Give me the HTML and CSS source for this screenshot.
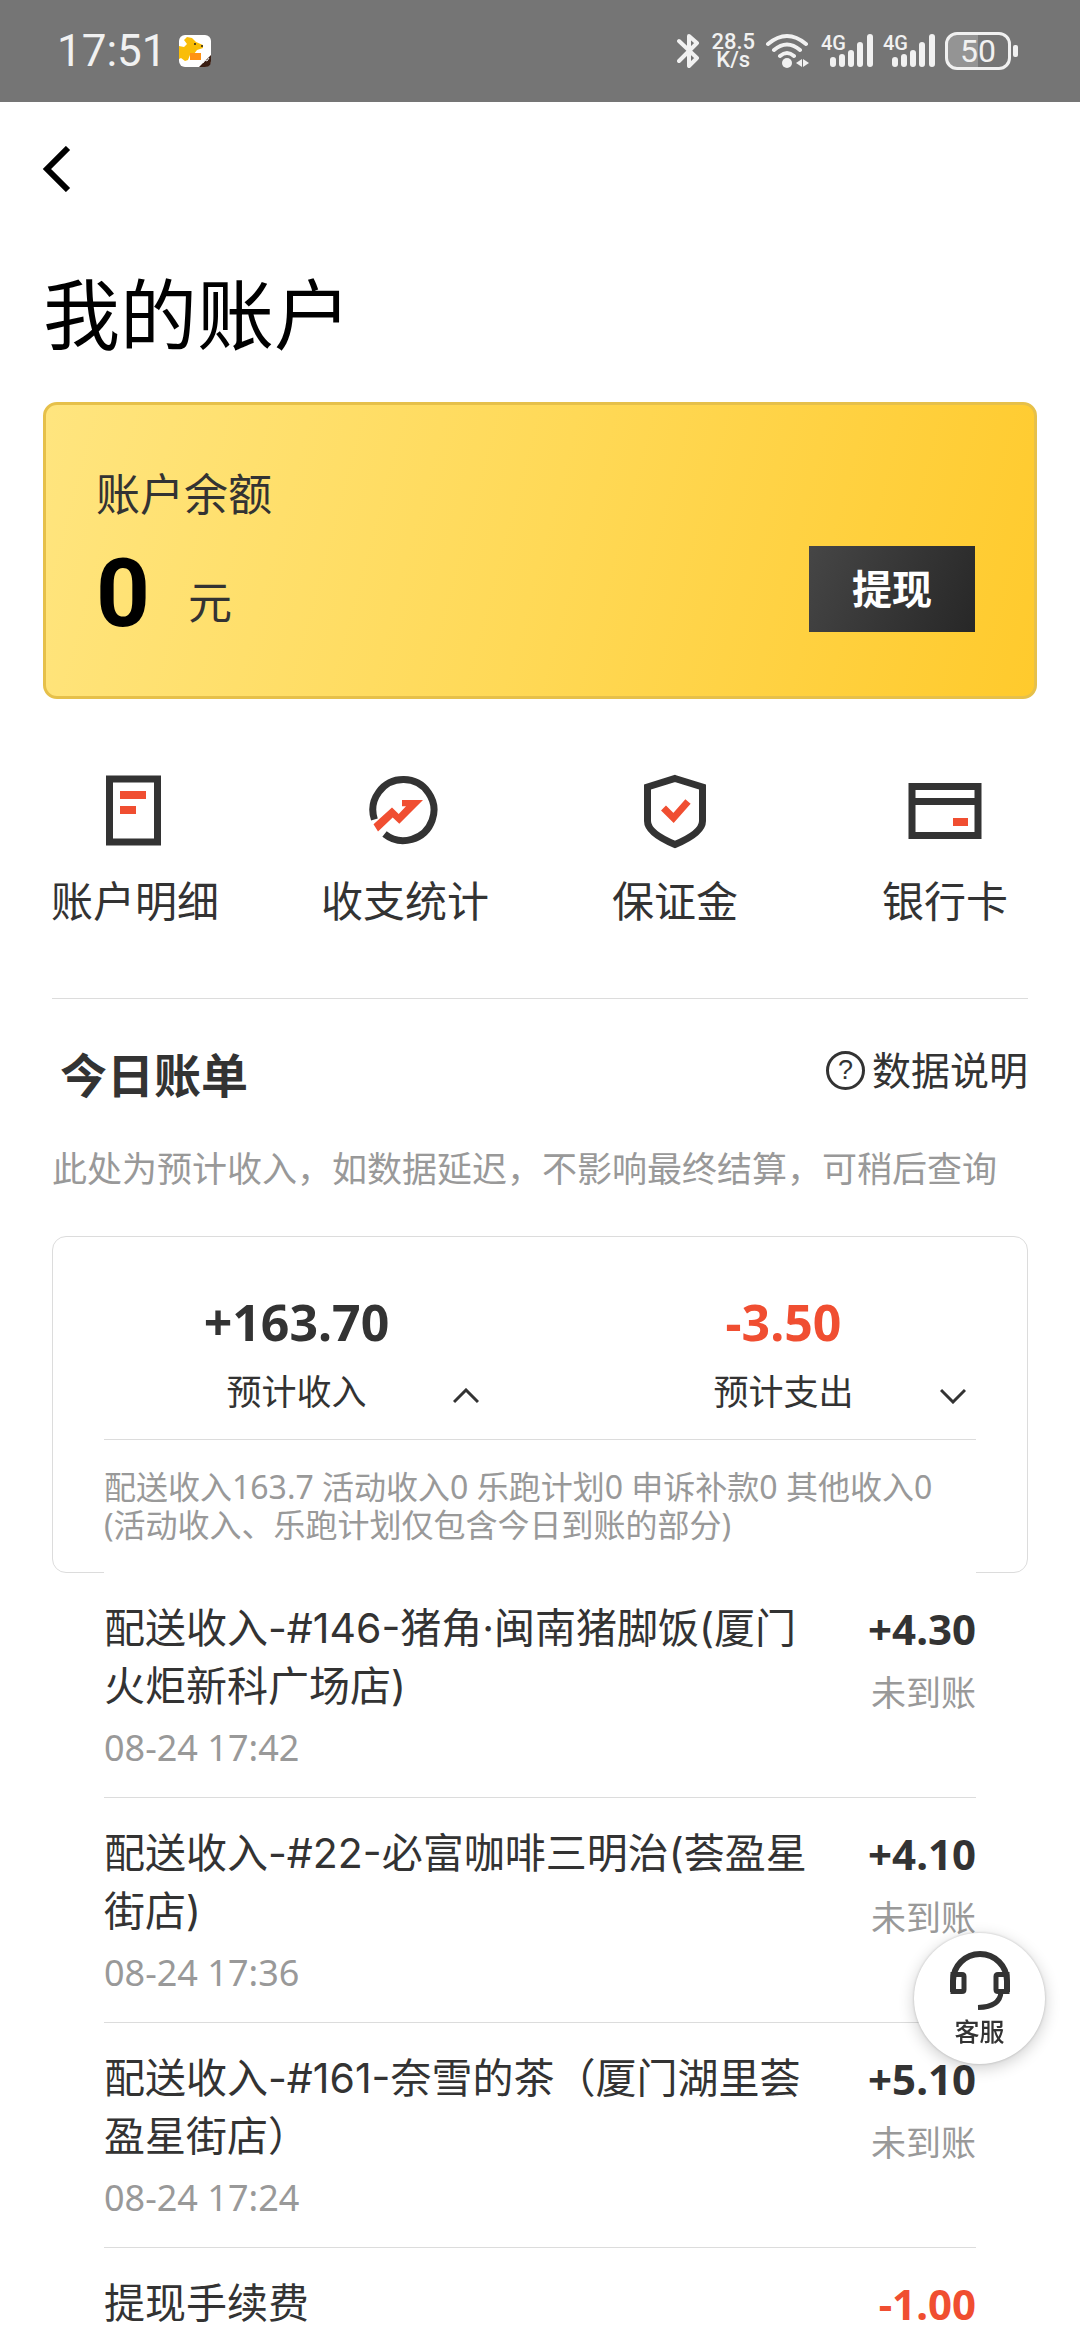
FILE: index.html
```html
<!DOCTYPE html>
<html lang="zh-CN">
<head>
<meta charset="utf-8">
<meta name="viewport" content="width=device-width, initial-scale=1">
<title>我的账户</title>
<link rel="stylesheet" href="styles.css">
</head>
<body>
<header class="status">
  <span class="status-time">17:51</span>
  <svg class="status-app" width="32" height="32" viewBox="0 0 32 32" aria-hidden="true">
    <rect width="32" height="32" rx="6" fill="#fff"/>
    <path d="M5 5l3-3 5 1 4 4 7 3v3l-6 2-3 4-4 1-2 5-3 1-4-3-2 1V11l5 1 3-3z" fill="#f9bd08"/>
    <circle cx="16" cy="9" r="1" fill="#222"/><circle cx="23" cy="11" r="1" fill="#222"/>
    <path d="M11 18h11v7H11z" fill="#ff9214"/>
    <path d="M32 20v6q0 6-6 6h-6z" fill="#3b1f14"/>
    <path d="M24 28l2-3 2 1M28 26l2-3" stroke="#eee" stroke-width="1" fill="none"/>
  </svg>
  <div class="status-right">
    <svg width="24" height="36" viewBox="0 0 24 36" fill="none" stroke="#f1f1f1" stroke-width="4" stroke-linecap="round" stroke-linejoin="round" aria-hidden="true"><path d="M2 8l18 17-8 8V3l8 7L2 28"/></svg>
    <span class="speed">28.5<br>K/s</span>
    <svg width="46" height="36" viewBox="0 0 46 36" fill="none" stroke="#f1f1f1" stroke-width="4" stroke-linecap="round" aria-hidden="true"><path d="M3 11q19-16 38 0M9 17q13-11 26 0M15 23q7-6 14 0"/><circle cx="22" cy="30" r="5" fill="#f1f1f1" stroke="none"/><path d="M37 26v8l-6-4zM38 34v-8l6 4z" fill="#f1f1f1" stroke="none"/></svg>
    <span class="signal"><span class="net">4G</span><svg width="52" height="36" viewBox="0 0 52 36" stroke="#f1f1f1" stroke-width="6" stroke-linecap="round" aria-hidden="true"><path d="M12 27v4M21 24v7M30 20v11M39 12v19M49 4v27"/></svg></span>
    <span class="signal"><span class="net">4G</span><svg width="52" height="36" viewBox="0 0 52 36" stroke="#f1f1f1" stroke-width="6" stroke-linecap="round" aria-hidden="true"><path d="M12 27v4M21 24v7M30 20v11M39 12v19M49 4v27"/></svg></span>
    <span class="battery"><span class="battery-body">50</span><span class="battery-tip"></span></span>
  </div>
</header>

<main>
  <nav class="nav">
    <button class="back" type="button" aria-label="返回">
      <svg width="30" height="46" viewBox="0 0 30 46" fill="none" stroke="#000" stroke-width="6" aria-hidden="true"><path d="M27 2L6 23l21 21"/></svg>
    </button>
  </nav>
  <h1 class="title">我的账户</h1>

  <section class="balance">
    <div class="balance-label">账户余额</div>
    <div class="balance-row">
      <span class="balance-value">0</span>
      <span class="balance-unit">元</span>
      <button class="withdraw" type="button">提现</button>
    </div>
  </section>

  <nav class="menu">
    <a class="menu-item" href="#detail">
      <svg width="76" height="76" viewBox="0 0 76 76" aria-hidden="true"><path d="M12.5 6h48v63h-48z" fill="none" stroke="#333" stroke-width="7"/><path d="M23 18h26v8H23zM23 33h16v8H23z" fill="#f04e31"/></svg>
      <span>账户明细</span>
    </a>
    <a class="menu-item" href="#stats">
      <svg width="76" height="76" viewBox="0 0 76 76" aria-hidden="true"><path d="M7.400 46.500A30.500 30.500 0 1 1 17.500 61" fill="none" stroke="#333" stroke-width="7"/><path d="M6.500 51.300L25 34.500l6.700 6.500 7.300-7.700h-4v-6.200h21L32.300 50.700 25.700 44.500 11 58.500z" fill="#f04e31"/></svg>
      <span>收支统计</span>
    </a>
    <a class="menu-item" href="#deposit">
      <svg width="76" height="76" viewBox="0 0 76 76" aria-hidden="true"><path d="M38 5.500L65.500 14v34q0 12-27.500 23.500Q10.500 60 10.500 48V14z" fill="none" stroke="#333" stroke-width="7"/><path d="M26.500 35l10 10L51 28.500" fill="none" stroke="#f04e31" stroke-width="7"/></svg>
      <span>保证金</span>
    </a>
    <a class="menu-item" href="#cards">
      <svg width="76" height="76" viewBox="0 0 76 76" aria-hidden="true"><path d="M5 13.500h66v49H5zM5 28.500h66" fill="none" stroke="#333" stroke-width="7"/><path d="M46 45h15v8H46z" fill="#f04e31"/></svg>
      <span>银行卡</span>
    </a>
  </nav>

  <section class="today">
    <div class="today-head">
      <h2 class="today-title">今日账单</h2>
      <a class="explain" href="#explain"><span class="explain-icon" aria-hidden="true">?</span>数据说明</a>
    </div>
    <p class="hint">此处为预计收入，如数据延迟，不影响最终结算，可稍后查询</p>

    <div class="summary">
      <div class="summary-cols">
        <button class="summary-col" type="button" aria-expanded="true">
          <span class="summary-amount">+163.70</span>
          <span class="summary-label">预计收入</span>
          <svg class="chevron" width="26" height="16" viewBox="0 0 26 16" fill="none" stroke="#333" stroke-width="3" aria-hidden="true"><path d="M1 14L13 2l12 12"/></svg>
        </button>
        <button class="summary-col" type="button" aria-expanded="false">
          <span class="summary-amount out">-3.50</span>
          <span class="summary-label">预计支出</span>
          <svg class="chevron" width="26" height="16" viewBox="0 0 26 16" fill="none" stroke="#333" stroke-width="3" aria-hidden="true"><path d="M1 2l12 12L25 2"/></svg>
        </button>
      </div>
      <p class="summary-note">配送收入163.7 活动收入0 乐跑计划0 申诉补款0 其他收入0<br>(活动收入、乐跑计划仅包含今日到账的部分)</p>
    </div>

    <ul class="bills">
      <li class="bill">
        <div class="bill-main"><div class="bill-name">配送收入-#146-猪角·闽南猪脚饭(厦门火炬新科广场店)</div><time class="bill-time">08-24 17:42</time></div>
        <div class="bill-side"><div class="bill-amount">+4.30</div><div class="bill-state">未到账</div></div>
      </li>
      <li class="bill">
        <div class="bill-main"><div class="bill-name">配送收入-#22-必富咖啡三明治(荟盈星街店)</div><time class="bill-time">08-24 17:36</time></div>
        <div class="bill-side"><div class="bill-amount">+4.10</div><div class="bill-state">未到账</div></div>
      </li>
      <li class="bill">
        <div class="bill-main"><div class="bill-name">配送收入-#161-奈雪的茶（厦门湖里荟盈星街店）</div><time class="bill-time">08-24 17:24</time></div>
        <div class="bill-side"><div class="bill-amount">+5.10</div><div class="bill-state">未到账</div></div>
      </li>
      <li class="bill">
        <div class="bill-main"><div class="bill-name">提现手续费</div></div>
        <div class="bill-side"><div class="bill-amount out">-1.00</div></div>
      </li>
    </ul>
  </section>
</main>

<button class="service" type="button">
  <svg width="62" height="62" viewBox="0 0 62 62" fill="none" stroke="#333" stroke-width="6" aria-hidden="true"><path d="M4 42V31a27 27 0 0 1 54 0v11"/><path d="M4 24.500h9q2 0 2 2v13q0 2-2 2H4zM58 24.500h-9q-2 0-2 2v13q0 2 2 2h9zM52 42q-1 15-23 15.500" stroke-width="5"/></svg>
  <span>客服</span>
</button>
</body>
</html>
```
FILE: styles.css
```css
* {
  box-sizing: border-box;
}

body {
  margin: 0;
  background: #fff;
  color: #333;
  font-family: "Noto Sans", "Noto Sans CJK SC", sans-serif;
  font-size: 35px;
}

button {
  margin: 0;
  padding: 0;
  border: 0;
  background: none;
  color: inherit;
  font: inherit;
}

a {
  color: inherit;
  text-decoration: none;
}

h1,
h2,
p,
ul {
  margin: 0;
  padding: 0;
}

svg {
  display: block;
  flex: none;
}

/* status bar */
.status {
  display: flex;
  align-items: center;
  height: 102px;
  padding: 0 62px 0 57px;
  background: #757575;
  color: #f1f1f1;
  font-family: Roboto, sans-serif;
}

.status-time {
  font-size: 44px;
}

.status-app {
  margin-left: 12px;
}

.status-right {
  display: flex;
  align-items: center;
  gap: 10px;
  margin-left: auto;
}

.speed {
  font-size: 22px;
  font-weight: 500;
  line-height: 18px;
  text-align: center;
}

.signal {
  position: relative;
}

.net {
  position: absolute;
  left: 0;
  top: 0;
  font-size: 20px;
  font-weight: 500;
  line-height: 20px;
}

.battery {
  display: flex;
  align-items: center;
  gap: 2px;
}

.battery-body {
  width: 66px;
  height: 38px;
  border: 3px solid #f1f1f1;
  border-radius: 12px;
  background: linear-gradient(90deg, #949494 50%, #757575 50%);
  font-size: 32px;
  line-height: 32px;
  text-align: center;
}

.battery-tip {
  width: 5px;
  height: 12px;
  border-radius: 2px;
  background: #f1f1f1;
}

/* page heading */
.nav {
  display: flex;
  align-items: center;
  height: 134px;
  padding: 0 41px;
}

.title {
  margin: 29px 43px 0;
  color: #000;
  font-size: 77px;
  font-weight: 400;
  line-height: 100px;
}

/* balance card */
.balance {
  margin: 37px 43px 0;
  padding: 59px 59px 64px 50px;
  border: 3px solid #e6c04a;
  border-radius: 14px;
  background: linear-gradient(105deg, #ffe57f, #ffd957 50%, #ffca2c) border-box;
}

.balance-label,
.balance-unit {
  font-size: 44px;
  line-height: 60px;
}

.balance-row {
  display: flex;
  align-items: flex-end;
  margin-top: 22px;
}

.balance-value {
  margin-right: 38px;
  color: #000;
  font-family: Roboto, sans-serif;
  font-size: 94px;
  font-weight: 700;
  line-height: 76px;
}

.withdraw {
  margin-left: auto;
  padding: 0 43px;
  background: linear-gradient(115deg, #464646, #272727);
  color: #fff;
  font-size: 40px;
  font-weight: 700;
  line-height: 86px;
}

/* shortcuts */
.menu {
  display: grid;
  grid-template-columns: repeat(4, 1fr);
  margin-top: 74px;
}

.menu-item {
  display: flex;
  flex-direction: column;
  align-items: center;
  gap: 22px;
  font-size: 42px;
  line-height: 60px;
}

/* today's bills */
.today {
  margin: 67px 52px 0;
  padding-top: 44px;
  border-top: 1px solid #dcdcdc;
}

.today-head {
  display: flex;
  align-items: flex-start;
  justify-content: space-between;
  padding-left: 8px;
}

.today-title {
  font-size: 47px;
  font-weight: 700;
  line-height: 64px;
}

.explain {
  display: flex;
  align-items: center;
  gap: 7px;
  font-size: 39px;
  line-height: 54px;
}

.explain-icon {
  width: 39px;
  height: 39px;
  border: 3px solid #333;
  border-radius: 50%;
  font-family: "Liberation Sans", sans-serif;
  font-size: 27px;
  line-height: 33px;
  text-align: center;
}

.hint {
  margin-top: 37px;
  color: #999;
  line-height: 50px;
}

.summary {
  margin-top: 42px;
  border: 1px solid #dcdcdc;
  border-radius: 14px;
}

.summary-cols {
  display: grid;
  grid-template-columns: 1fr 1fr;
}

.summary-col {
  display: grid;
  grid-template-columns: 1fr auto 1fr;
  align-items: center;
  row-gap: 16px;
  padding: 55px 0 23px;
}

.summary-amount {
  grid-column: 1 / -1;
  font-size: 50px;
  font-weight: 700;
  line-height: 60px;
}

.summary-label {
  grid-column: 2;
  line-height: 48px;
}

.chevron {
  justify-self: end;
  margin: 8px 61px 0 0;
}

.out {
  color: #f04e31;
}

.summary-note {
  margin: 0 51px;
  padding: 28px 0;
  border-top: 1px solid #dcdcdc;
  color: #999;
  font-size: 32px;
  line-height: 38px;
}

/* the list's white ground covers the lower edge of the summary box */
.bills {
  position: relative;
  margin: -1px 52px 0;
  padding-top: 1px;
  background: #fff;
  list-style: none;
}

.bill {
  display: flex;
  justify-content: space-between;
  padding: 26px 0 25px;
  border-bottom: 1px solid #dcdcdc;
}

.bill:last-child {
  padding-bottom: 0;
  border-bottom: 0;
}

.bill-main {
  flex: 1;
  padding-right: 42px;
}

.bill-name {
  font-family: Inter, "Noto Sans CJK SC", sans-serif;
  font-size: 41px;
  line-height: 58px;
}

.bill-time {
  display: block;
  margin-top: 9px;
  color: #999;
  font-size: 36px;
  line-height: 48px;
}

.bill-side {
  text-align: right;
  white-space: nowrap;
}

.bill-amount {
  font-size: 42px;
  font-weight: 700;
  line-height: 60px;
}

.bill-state {
  margin-top: 10px;
  color: #999;
  line-height: 48px;
}

/* floating customer service button */
.service {
  position: fixed;
  right: 35px;
  bottom: 276px;
  display: flex;
  flex-direction: column;
  align-items: center;
  width: 131px;
  height: 131px;
  padding-top: 17px;
  border-radius: 50%;
  background: #fff;
  box-shadow: 0 4px 16px rgba(0, 0, 0, 0.2), 0 0 3px rgba(0, 0, 0, 0.2);
  font-size: 25px;
  font-weight: 500;
  line-height: 38px;
}
```
